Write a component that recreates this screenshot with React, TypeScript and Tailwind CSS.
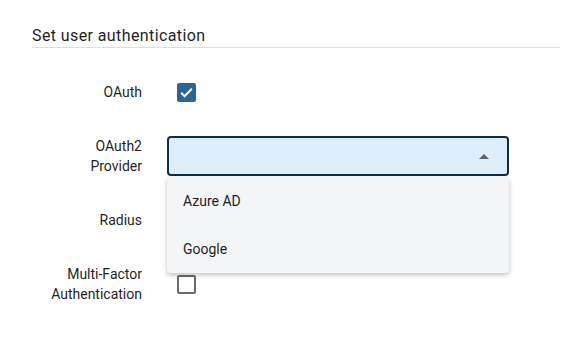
import { useState } from "react";

const Checkbox = ({ checked }: { checked: boolean }) =>
  checked ? (
    <div className="w-[19px] h-[19px] rounded-[2px] bg-[#2c6497] flex items-center justify-center">
      <svg width="15" height="15" viewBox="0 0 24 24" fill="none">
        <path d="M3.5 12.5l5.5 5.5L20.5 6" stroke="white" strokeWidth="3.2" />
      </svg>
    </div>
  ) : (
    <div className="w-[19px] h-[19px] rounded-[2px] border-2 border-[#6b6b6b] bg-white"></div>
  );

const App = () => {
  const [open] = useState(true);
  const providers = ["Azure AD", "Google"];

  return (
    <div
      className="w-[573px] h-[341px] bg-white text-[#1f1f1f] pl-8"
      style={{ fontFamily: "Roboto, 'Noto Sans', sans-serif" }}
    >
      {/* Section title */}
      <div className="w-[528px] pt-[26px] pb-px border-b border-[#dedede]">
        <h2 className="text-[16px] leading-5 tracking-[0.4px]">Set user authentication</h2>
      </div>

      <div className="mt-[12px] flex flex-col text-[14px] leading-5">
        {/* OAuth */}
        <div className="h-16 flex items-center">
          <div className="w-[110px] text-right">OAuth</div>
          <div className="pl-[35px]">
            <Checkbox checked={true} />
          </div>
        </div>

        {/* OAuth2 Provider */}
        <div className="h-16 flex items-center">
          <div className="w-[110px] text-right">
            OAuth2
            <br />
            Provider
          </div>
          <div className="pl-[25px] relative">
            <div className="w-[342px] h-10 rounded-[4px] border-2 border-[#0e2d4d] bg-[#ddeefb] flex items-center justify-end pr-[18px]">
              <svg width="10" height="5" viewBox="0 0 10 5">
                <path d="M0 5L5 0L10 5Z" fill="#5f6368" />
              </svg>
            </div>
            {open && (
              <div className="absolute left-[25px] top-[41px] w-[342px] z-10 bg-[#f4f5f7] rounded-[4px] shadow-[0_2px_5px_rgba(0,0,0,0.25)]">
                {providers.map((p) => (
                  <div key={p} className="h-12 flex items-center px-4">
                    {p}
                  </div>
                ))}
              </div>
            )}
          </div>
        </div>

        {/* Radius */}
        <div className="h-16 flex items-center">
          <div className="w-[110px] text-right">Radius</div>
          <div className="pl-[35px]">
            <Checkbox checked={false} />
          </div>
        </div>

        {/* MFA */}
        <div className="h-16 flex items-center">
          <div className="w-[110px] text-right">
            Multi-Factor
            <br />
            Authentication
          </div>
          <div className="pl-[35px]">
            <Checkbox checked={false} />
          </div>
        </div>
      </div>
    </div>
  );
};

export default App;
